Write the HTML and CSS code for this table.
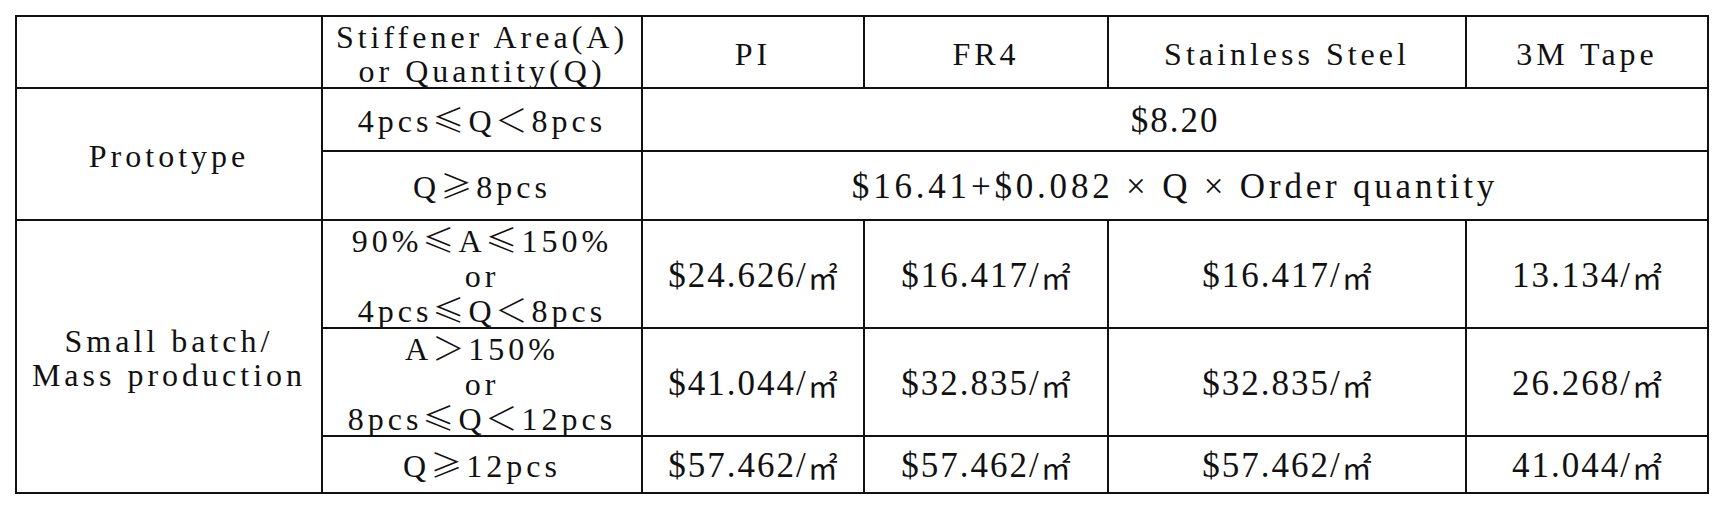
FILE: index.html
```html
<!DOCTYPE html>
<html lang="en">
<head>
<meta charset="utf-8">
<title>Stiffener pricing</title>
<link rel="stylesheet" href="styles.css">
</head>
<body>
<div class="sheet">
  <div class="cell"></div>
  <div class="cell label">Stiffener Area(A)<br>or Quantity(Q)</div>
  <div class="cell label">PI</div>
  <div class="cell label">FR4</div>
  <div class="cell label">Stainless Steel</div>
  <div class="cell label">3M Tape</div>

  <div class="cell label span-proto">Prototype</div>
  <div class="cell label">4pcs<span class="sym">≤</span>Q<span class="sym">＜</span>8pcs</div>
  <div class="cell price span-4">$8.20</div>

  <div class="cell label">Q<span class="sym">≥</span>8pcs</div>
  <div class="cell price formula span-4">$16.41+$0.082 × Q × Order quantity</div>

  <div class="cell label span-mass">Small batch/<br>Mass production</div>
  <div class="cell label tight">90%<span class="sym">≤</span>A<span class="sym">≤</span>150%<br>or<br>4pcs<span class="sym">≤</span>Q<span class="sym">＜</span>8pcs</div>
  <div class="cell price">$24.626/<span class="unit">㎡</span></div>
  <div class="cell price">$16.417/<span class="unit">㎡</span></div>
  <div class="cell price">$16.417/<span class="unit">㎡</span></div>
  <div class="cell price">13.134/<span class="unit">㎡</span></div>

  <div class="cell label tight">A<span class="sym">＞</span>150%<br>or<br>8pcs<span class="sym">≤</span>Q<span class="sym">＜</span>12pcs</div>
  <div class="cell price">$41.044/<span class="unit">㎡</span></div>
  <div class="cell price">$32.835/<span class="unit">㎡</span></div>
  <div class="cell price">$32.835/<span class="unit">㎡</span></div>
  <div class="cell price">26.268/<span class="unit">㎡</span></div>

  <div class="cell label">Q<span class="sym">≥</span>12pcs</div>
  <div class="cell price">$57.462/<span class="unit">㎡</span></div>
  <div class="cell price">$57.462/<span class="unit">㎡</span></div>
  <div class="cell price">$57.462/<span class="unit">㎡</span></div>
  <div class="cell price">41.044/<span class="unit">㎡</span></div>
</div>
</body>
</html>
```

FILE: styles.css
```css
html, body {
  margin: 0;
  background: #ffffff;
}

body {
  padding: 15px 0 0 15px;
  font-family: "Liberation Serif", "Times New Roman", "DejaVu Serif", serif;
  color: #111111;
}

.sheet {
  display: grid;
  grid-template-columns: 306px 320px 222px 244px 358px 242px;
  grid-template-rows: 72px 63px 69px 108px 108px 57px;
  width: max-content;
  border-top: 2px solid #111111;
  border-left: 2px solid #111111;
}

.cell {
  box-sizing: border-box;
  border-right: 2px solid #111111;
  border-bottom: 2px solid #111111;
  display: flex;
  align-items: center;
  justify-content: center;
  text-align: center;
  line-height: 34px;
  padding-top: 3px;
  white-space: nowrap;
}

.label {
  display: block;
  align-content: center;
  font-size: 32px;
  letter-spacing: 4px;
}

.tight {
  line-height: 35px;
  padding-top: 3px;
  align-content: start;
}

.price {
  font-size: 35px;
  letter-spacing: 2px;
}

.formula {
  letter-spacing: 3.8px;
}

.sym {
  font-family: "Noto Sans CJK SC", "Liberation Serif", sans-serif;
  font-weight: 300;
  line-height: 0;
}

.unit {
  font-family: "Noto Sans CJK SC", sans-serif;
  font-size: 30px;
  letter-spacing: 0;
  line-height: 0;
}

.span-proto {
  grid-row: span 2;
}

.span-mass {
  grid-row: span 3;
}

.span-4 {
  grid-column: span 4;
}
```
